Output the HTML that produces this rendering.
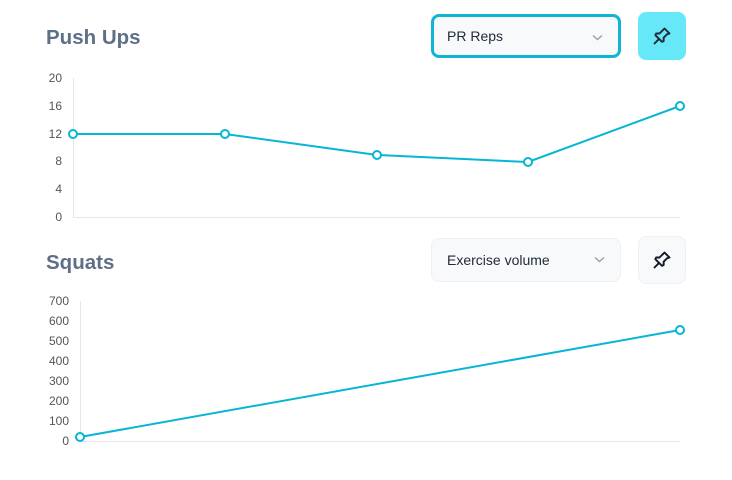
<!DOCTYPE html>
<html><head><style>
body{margin:0;width:732px;height:480px;background:#fff;font-family:"Liberation Sans",sans-serif;position:relative;overflow:hidden}
.t{position:absolute;left:46px;font-size:20.5px;font-weight:bold;color:#5f6f86}
.sel{position:absolute;left:431px;width:190px;height:44px;box-sizing:border-box;background:#f8f9fb;border-radius:8px;font-size:14px;color:#1f2937;line-height:42px;padding-left:15px}
.sel svg{position:absolute;right:15px;top:17px}
.pin{position:absolute;left:638px;width:48px;height:48px;box-sizing:border-box;border-radius:8px}
.pin svg{position:absolute;left:14px;top:14px}
</style></head><body>
<div class="t" style="top:26px">Push Ups</div>
<div class="sel" style="top:14px;border:3px solid #0fb5d4;line-height:38px;padding-left:13px">PR Reps<svg width="11" height="7" viewBox="0 0 11 7"><path d="M1 1.5l4.5 4 4.5-4" fill="none" stroke="#9ca3af" stroke-width="1.5"/></svg></div>
<div class="pin" style="top:12px;background:#67e8f9"><svg width="20" height="20" viewBox="0 0 24 24" fill="none" stroke="#1f2937" stroke-width="2.3" stroke-linejoin="round" stroke-linecap="round"><path d="M15 3l6 6-3 1-4 4 0 4-2 1-8-8 1-2 4 0 4-4z"/><path d="M8 16l-5 5"/></svg></div>

<div class="t" style="top:251px">Squats</div>
<div class="sel" style="top:238px;border:1px solid #eef0f3">Exercise volume<svg width="11" height="7" viewBox="0 0 11 7"><path d="M1 1.5l4.5 4 4.5-4" fill="none" stroke="#9ca3af" stroke-width="1.5"/></svg></div>
<div class="pin" style="top:236px;background:#f8f9fb;border:1px solid #eef0f3"><svg width="20" height="20" viewBox="0 0 24 24" fill="none" stroke="#111827" stroke-width="2.3" stroke-linejoin="round" stroke-linecap="round" style="left:13px;top:13px"><path d="M15 3l6 6-3 1-4 4 0 4-2 1-8-8 1-2 4 0 4-4z"/><path d="M8 16l-5 5"/></svg></div>

<svg width="732" height="480" style="position:absolute;left:0;top:0" font-family="Liberation Sans, sans-serif" font-size="12" fill="#555">
<g stroke="#e5e7eb" stroke-width="1">
<line x1="73.5" y1="78" x2="73.5" y2="217"/><line x1="73" y1="217.5" x2="680" y2="217.5"/>
<line x1="80.5" y1="301" x2="80.5" y2="441"/><line x1="80" y1="441.5" x2="680" y2="441.5"/>
</g>
<g text-anchor="end" fill="#555">
<text x="62" y="82">20</text><text x="62" y="110">16</text><text x="62" y="138">12</text><text x="62" y="165">8</text><text x="62" y="193">4</text><text x="62" y="221">0</text>
<text x="69" y="305">700</text><text x="69" y="325">600</text><text x="69" y="345">500</text><text x="69" y="365">400</text><text x="69" y="385">300</text><text x="69" y="405">200</text><text x="69" y="425">100</text><text x="69" y="445">0</text>
</g>
<g fill="none" stroke="#06b6d4" stroke-width="2">
<polyline points="73,134 225,134 377,155 528,162 680,106"/>
<polyline points="80,437 680,330"/>
</g>
<g fill="#fff" stroke="#06b6d4" stroke-width="2">
<circle cx="73" cy="134" r="4"/><circle cx="225" cy="134" r="4"/><circle cx="377" cy="155" r="4"/><circle cx="528" cy="162" r="4"/><circle cx="680" cy="106" r="4"/>
<circle cx="80" cy="437" r="4"/><circle cx="680" cy="330" r="4"/>
</g>
</svg>
</body></html>
